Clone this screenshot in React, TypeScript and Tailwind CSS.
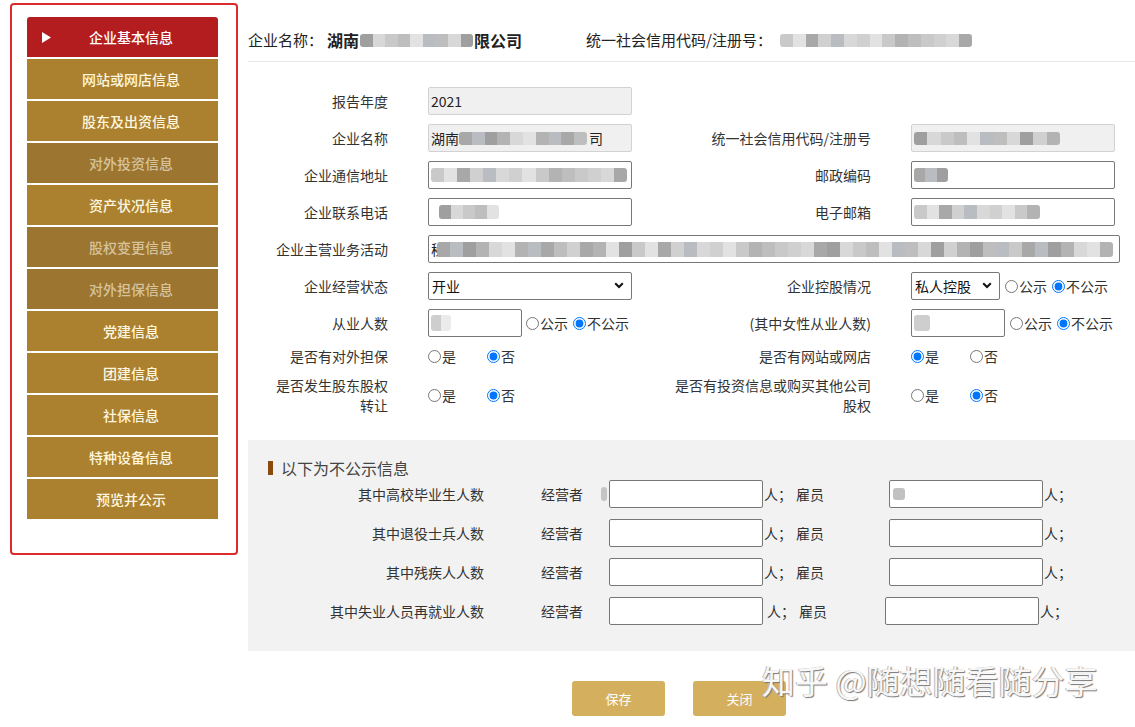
import React from "react";

const SHADES = [
  "bg-[#c9c9c9]",
  "bg-[#b3b3b3]",
  "bg-[#d8d8d8]",
  "bg-[#a8a8a8]",
  "bg-[#bebebe]",
  "bg-[#e2e2e2]",
  "bg-[#9f9f9f]",
  "bg-[#d0d0d0]",
  "bg-[#b9bcc0]",
];

function Blur({ w, h = 13, seed = 0, className = "" }: { w: number; h?: number; seed?: number; className?: string }) {
  const n = Math.max(1, Math.round(w / 13));
  return (
    <span
      className={`inline-flex shrink-0 overflow-hidden rounded-[3px] blur-[0.7px] ${className}`}
      style={{ width: w, height: h }}
    >
      {Array.from({ length: n }).map((_, i) => (
        <span key={i} className={`h-full flex-1 ${SHADES[(i * 4 + seed * 3 + ((i * i) % 5)) % SHADES.length]}`} />
      ))}
    </span>
  );
}

type MenuState = "active" | "normal" | "disabled";
const MENU: { t: string; s: MenuState }[] = [
  { t: "企业基本信息", s: "active" },
  { t: "网站或网店信息", s: "normal" },
  { t: "股东及出资信息", s: "normal" },
  { t: "对外投资信息", s: "disabled" },
  { t: "资产状况信息", s: "normal" },
  { t: "股权变更信息", s: "disabled" },
  { t: "对外担保信息", s: "disabled" },
  { t: "党建信息", s: "normal" },
  { t: "团建信息", s: "normal" },
  { t: "社保信息", s: "normal" },
  { t: "特种设备信息", s: "normal" },
  { t: "预览并公示", s: "normal" },
];

function Sidebar() {
  return (
    <div className="shrink-0 pl-[10px] pt-[3px] w-[248px]">
      <div className="w-[228px] h-[552px] border-2 border-[#dc2b2b] rounded-[4px] pl-[15px] pt-[12px]">
        {MENU.map((m) => {
          const cls =
            m.s === "active"
              ? "bg-[#b41d1f] text-white rounded-t-[3px]"
              : m.s === "disabled"
              ? "bg-[#9c7530] text-[#d6c39c]"
              : "bg-[#ab812f] text-[#fff6df]";
          return (
            <div
              key={m.t}
              className={`relative w-[191px] h-[40px] mb-[2px] flex items-center justify-center pl-[17px] text-[14px] font-medium ${cls}`}
            >
              {m.s === "active" && (
                <svg className="absolute left-[15px] top-[15px]" width="9" height="11" viewBox="0 0 9 11">
                  <polygon points="0,0 9,5.5 0,11" fill="#ffffff" />
                </svg>
              )}
              {m.t}
            </div>
          );
        })}
      </div>
    </div>
  );
}

function Box({
  w,
  ro = false,
  children,
  className = "",
}: {
  w: number;
  ro?: boolean;
  children?: React.ReactNode;
  className?: string;
}) {
  return (
    <div
      className={`h-[28px] flex items-center overflow-hidden pl-[2px] text-[14px] text-[#222] rounded-[2px] border ${
        ro ? "bg-[#f0f0f0] border-[#d2d2d2]" : "bg-white border-[#777777]"
      } ${className}`}
      style={{ width: w }}
    >
      {children}
    </div>
  );
}

function Chevron() {
  return (
    <svg className="absolute right-[8px] top-[10px]" width="10" height="7" viewBox="0 0 10 7">
      <polyline points="1.2,1.2 5,5 8.8,1.2" fill="none" stroke="#111" strokeWidth="2" />
    </svg>
  );
}

function Select({ w, text }: { w: number; text: string }) {
  return (
    <div className="relative shrink-0">
      <div
        className="h-[28px] flex items-center pl-[3px] text-[14px] text-[#111] bg-white border border-[#777777] rounded-[2px]"
        style={{ width: w }}
      >
        {text}
      </div>
      <Chevron />
    </div>
  );
}

function Radio({ checked, label, className = "" }: { checked: boolean; label: string; className?: string }) {
  return (
    <label className={`inline-flex items-center text-[14px] text-[#333] ${className}`}>
      <input type="radio" defaultChecked={checked} className="m-0 w-[13px] h-[13px]" />
      <span className="ml-[1px]">{label}</span>
    </label>
  );
}

function Label({ children }: { children: React.ReactNode }) {
  return <div className="text-right text-[14px] leading-[20px] text-[#333]">{children}</div>;
}

function Form() {
  return (
    <div className="grid grid-cols-[140px_204px_199px_204px] gap-x-[40px] gap-y-[9px] items-center mt-[25px]">
      <Label>报告年度</Label>
      <Box w={204} ro>
        2021
      </Box>
      <div />
      <div />

      <Label>企业名称</Label>
      <Box w={204} ro>
        湖南
        <Blur w={128} seed={1} />
        <span className="ml-[2px]">司</span>
      </Box>
      <Label>统一社会信用代码/注册号</Label>
      <Box w={204} ro>
        <Blur w={146} seed={2} />
      </Box>

      <Label>企业通信地址</Label>
      <Box w={204}>
        <Blur w={196} seed={3} h={14} />
      </Box>
      <Label>邮政编码</Label>
      <Box w={204}>
        <Blur w={34} seed={4} h={14} />
      </Box>

      <Label>企业联系电话</Label>
      <Box w={204}>
        <Blur w={60} seed={5} h={14} className="ml-[8px]" />
      </Box>
      <Label>电子邮箱</Label>
      <Box w={204}>
        <Blur w={126} seed={6} h={14} />
      </Box>

      <Label>企业主营业务活动</Label>
      <Box w={692} className="col-span-3">
        <span className="shrink-0">秘</span>
        <Blur w={676} seed={7} h={15} className="-ml-[8px]" />
      </Box>

      <Label>企业经营状态</Label>
      <Select w={204} text="开业" />
      <Label>企业控股情况</Label>
      <div className="flex items-center w-[230px]">
        <Select w={89} text="私人控股" />
        <Radio checked={false} label="公示" className="ml-[5px]" />
        <Radio checked label="不公示" className="ml-[5px]" />
      </div>

      <Label>从业人数</Label>
      <div className="flex items-center w-[230px]">
        <Box w={94} className="shrink-0">
          <Blur w={20} seed={2} h={16} className="opacity-50" />
        </Box>
        <Radio checked={false} label="公示" className="ml-[4px]" />
        <Radio checked label="不公示" className="ml-[5px]" />
      </div>
      <Label>(其中女性从业人数)</Label>
      <div className="flex items-center w-[230px]">
        <Box w={94} className="shrink-0">
          <Blur w={16} seed={5} h={16} className="opacity-50" />
        </Box>
        <Radio checked={false} label="公示" className="ml-[5px]" />
        <Radio checked label="不公示" className="ml-[5px]" />
      </div>

      <Label>是否有对外担保</Label>
      <div className="flex items-center h-[20px]">
        <Radio checked={false} label="是" />
        <Radio checked label="否" className="ml-[31px]" />
      </div>
      <Label>是否有网站或网店</Label>
      <div className="flex items-center h-[20px]">
        <Radio checked label="是" />
        <Radio checked={false} label="否" className="ml-[31px]" />
      </div>

      <Label>
        是否发生股东股权
        <br />
        转让
      </Label>
      <div className="flex items-center">
        <Radio checked={false} label="是" />
        <Radio checked label="否" className="ml-[31px]" />
      </div>
      <div className="-ml-[40px] w-[239px]">
        <Label>
          是否有投资信息或购买其他公司
          <br />
          股权
        </Label>
      </div>
      <div className="flex items-center">
        <Radio checked={false} label="是" />
        <Radio checked label="否" className="ml-[31px]" />
      </div>
    </div>
  );
}

function NPRow({ label, blur1, blur2, shift }: { label: string; blur1?: boolean; blur2?: boolean; shift?: boolean }) {
  return (
    <div className="flex items-center h-[28px] text-[14px] text-[#333]">
      <div className="w-[236px] text-right">{label}</div>
      <div className="ml-[57px] w-[42px]">经营者</div>
      <div className="ml-[18px] w-[8px] flex items-center">
        {blur1 && <Blur w={6} h={14} seed={1} className="opacity-60" />}
      </div>
      <div className="w-[154px] h-[28px] bg-white border border-[#777777] rounded-[2px]" />
      <div className={`${shift ? "ml-[4px] w-[28px]" : "ml-[1px] w-[31px]"}`}>人；</div>
      <div className={`${shift ? "ml-[4px]" : "ml-[1px]"} w-[28px]`}>雇员</div>
      <div className={`${shift ? "ml-[58px]" : "ml-[65px]"} w-[154px] h-[28px] bg-white border border-[#777777] rounded-[2px] flex items-center pl-[3px]`}>
        {blur2 && <Blur w={12} h={12} seed={4} className="opacity-70" />}
      </div>
      <div className="ml-[1px]">人；</div>
    </div>
  );
}

function NonPublic() {
  return (
    <div className="mt-[25px] h-[211px] bg-[#f2f2f2] pt-[18px]">
      <div className="flex items-center h-[20px] pl-[20px]">
        <div className="w-[5px] h-[14px] bg-[#8a4a0e]" />
        <div className="ml-[8px] text-[16px] text-[#444]">以下为不公示信息</div>
      </div>
      <div className="mt-[2px] flex flex-col gap-[11px]">
        <NPRow label="其中高校毕业生人数" blur1 blur2 />
        <NPRow label="其中退役士兵人数" />
        <NPRow label="其中残疾人人数" />
        <NPRow label="其中失业人员再就业人数" shift />
      </div>
    </div>
  );
}

function Header() {
  return (
    <div className="h-[62px] border-b border-[#e6e6e6] pt-[29px]">
      <div className="flex items-center h-[22px] text-[15px] text-[#222]">
        <span>企业名称：</span>
        <span className="font-bold text-[16px] ml-[4px]">湖南</span>
        <Blur w={113} h={13} seed={2} className="mx-[1px]" />
        <span className="font-bold text-[16px]">限公司</span>
        <span className="ml-[64px]">统一社会信用代码/注册号：</span>
        <Blur w={192} h={13} seed={6} className="ml-[8px]" />
      </div>
    </div>
  );
}

export default function App() {
  return (
    <div className="relative w-[1135px] h-[727px] overflow-hidden bg-white font-['Microsoft_YaHei','Noto_Sans_CJK_SC',sans-serif]">
      <div className="flex">
        <Sidebar />
        <div className="flex-1">
          <Header />
          <Form />
          <NonPublic />
          <div className="flex mt-[30px] pl-[324px] gap-[28px]">
            <button className="w-[93px] h-[35px] bg-[#d4af5e] rounded-[3px] text-white text-[13px]">保存</button>
            <button className="w-[93px] h-[35px] bg-[#d4af5e] rounded-[3px] text-white text-[13px]">关闭</button>
          </div>
        </div>
      </div>
      <div className="absolute left-[762px] top-[660px] text-[33px] leading-[40px] text-[#f7f7f7] [text-shadow:1px_1px_1px_#777,-1px_0_0_#bbb] pointer-events-none">
        知乎 @随想随看随分享
      </div>
    </div>
  );
}
